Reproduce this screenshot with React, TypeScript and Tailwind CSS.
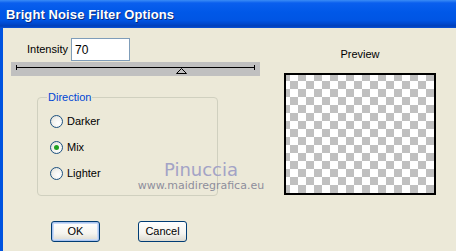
import React from "react";

function Radio({ label, checked }: { label: string; checked?: boolean }) {
  return (
    <div className="flex items-center h-[13px]">
      <span className="w-[13px] h-[13px] rounded-full border border-[#1c5180] bg-[radial-gradient(circle_at_65%_65%,#ffffff_0%,#f2f2ee_50%,#d8d8cf_100%)] flex items-center justify-center">
        {checked && <span className="w-[5px] h-[5px] rounded-full bg-[#21a121]" />}
      </span>
      <span className="ml-[4px] text-[11px] leading-none text-black">{label}</span>
    </div>
  );
}

function XpButton({ label, isDefault }: { label: string; isDefault?: boolean }) {
  return (
    <button
      className={
        "w-[49px] h-[21px] rounded-[3px] border border-[#003c74] bg-[linear-gradient(#ffffff,#f5f4ef_60%,#dcdad0)] text-[11px] text-black leading-none " +
        (isDefault ? "shadow-[inset_0_0_0_1px_#a9c3ef,inset_0_0_0_2px_#cbdcf7]" : "")
      }
    >
      {label}
    </button>
  );
}

function Checker() {
  return (
    <svg width="148" height="118" className="block">
      <defs>
        <pattern id="chk" width="16" height="16" patternUnits="userSpaceOnUse" x="-4" y="-2">
          <rect width="16" height="16" fill="#ffffff" />
          <rect width="8" height="8" fill="#c0c0c0" />
          <rect x="8" y="8" width="8" height="8" fill="#c0c0c0" />
        </pattern>
      </defs>
      <rect width="148" height="118" fill="url(#chk)" />
    </svg>
  );
}

export default function App() {
  return (
    <div className="w-[456px] h-[251px] overflow-hidden bg-[#ece9d8] flex flex-col font-['Liberation_Sans',Arial,sans-serif]">
      {/* title bar */}
      <div className="h-[28px] shrink-0 flex items-center pl-[6px] pt-[1px] bg-[linear-gradient(#3a8cf6_0px,#0a5fee_3px,#0058e8_12px,#0055e4_20px,#0047cc_24px,#003fb8_26px,#0a52d8_28px)]">
        <span className="text-[13px] font-bold text-white tracking-[0.1px] [text-shadow:1px_1px_0_#0a2a7a]">
          Bright Noise Filter Options
        </span>
      </div>

      {/* body */}
      <div className="relative flex-1 flex border-l-[3px] border-[#0053e0]">
        {/* left column */}
        <div className="w-[281px] flex flex-col">
          <div className="mt-[10px] ml-[24px] flex items-center h-[23px]">
            <span className="w-[44px] text-[11px] text-black">Intensity</span>
            <div className="w-[59px] h-[23px] border border-[#7f9db9] bg-white flex items-center pl-[3px] text-[12px] text-black">
              70
            </div>
          </div>

          <div className="ml-[8px] mt-[1px] w-[249px] h-[14px] bg-[#c0c0c0]">
            <svg width="249" height="14" className="block">
              <line x1="5" y1="5.5" x2="244" y2="5.5" stroke="#000" strokeWidth="1" />
              <line x1="5.5" y1="3" x2="5.5" y2="8" stroke="#000" strokeWidth="1" />
              <line x1="243.5" y1="3" x2="243.5" y2="8" stroke="#000" strokeWidth="1" />
              <polygon points="170.5,6.5 165.5,11.5 175.5,11.5" fill="#c0c0c0" stroke="#000" strokeWidth="1" />
            </svg>
          </div>

          <div className="relative ml-[34px] mt-[21px] w-[181px] h-[99px] rounded-[4px] border border-[#d0d0bf]">
            <span className="absolute left-[9px] -top-[7px] px-[1px] bg-[#ece9d8] text-[11px] leading-[13px] text-[#0046d5]">
              Direction
            </span>
            <div className="flex flex-col gap-[13px] pl-[12px] pt-[17px]">
              <Radio label="Darker" />
              <Radio label="Mix" checked />
              <Radio label="Lighter" />
            </div>
          </div>

          <div className="mt-[25px] ml-[48px] flex gap-[38px]">
            <XpButton label="OK" isDefault />
            <XpButton label="Cancel" />
          </div>
        </div>

        {/* right column */}
        <div className="flex flex-col w-[152px]">
          <div className="mt-[20px] h-[13px] text-center text-[11px] leading-[13px] text-black">Preview</div>
          <div className="mt-[12px] w-[152px] h-[122px] border-2 border-black">
            <Checker />
          </div>
        </div>

        {/* watermark */}
        <div className="absolute left-[130px] top-[132px] w-[136px] flex flex-col items-center font-['DejaVu_Sans',sans-serif] pointer-events-none">
          <span className="text-[18px] leading-[20px] text-[#a3a3c6]">Pinuccia</span>
          <span className="text-[11px] leading-[12px] text-[#8e8e9c]">www.maidiregrafica.eu</span>
        </div>
      </div>
    </div>
  );
}
